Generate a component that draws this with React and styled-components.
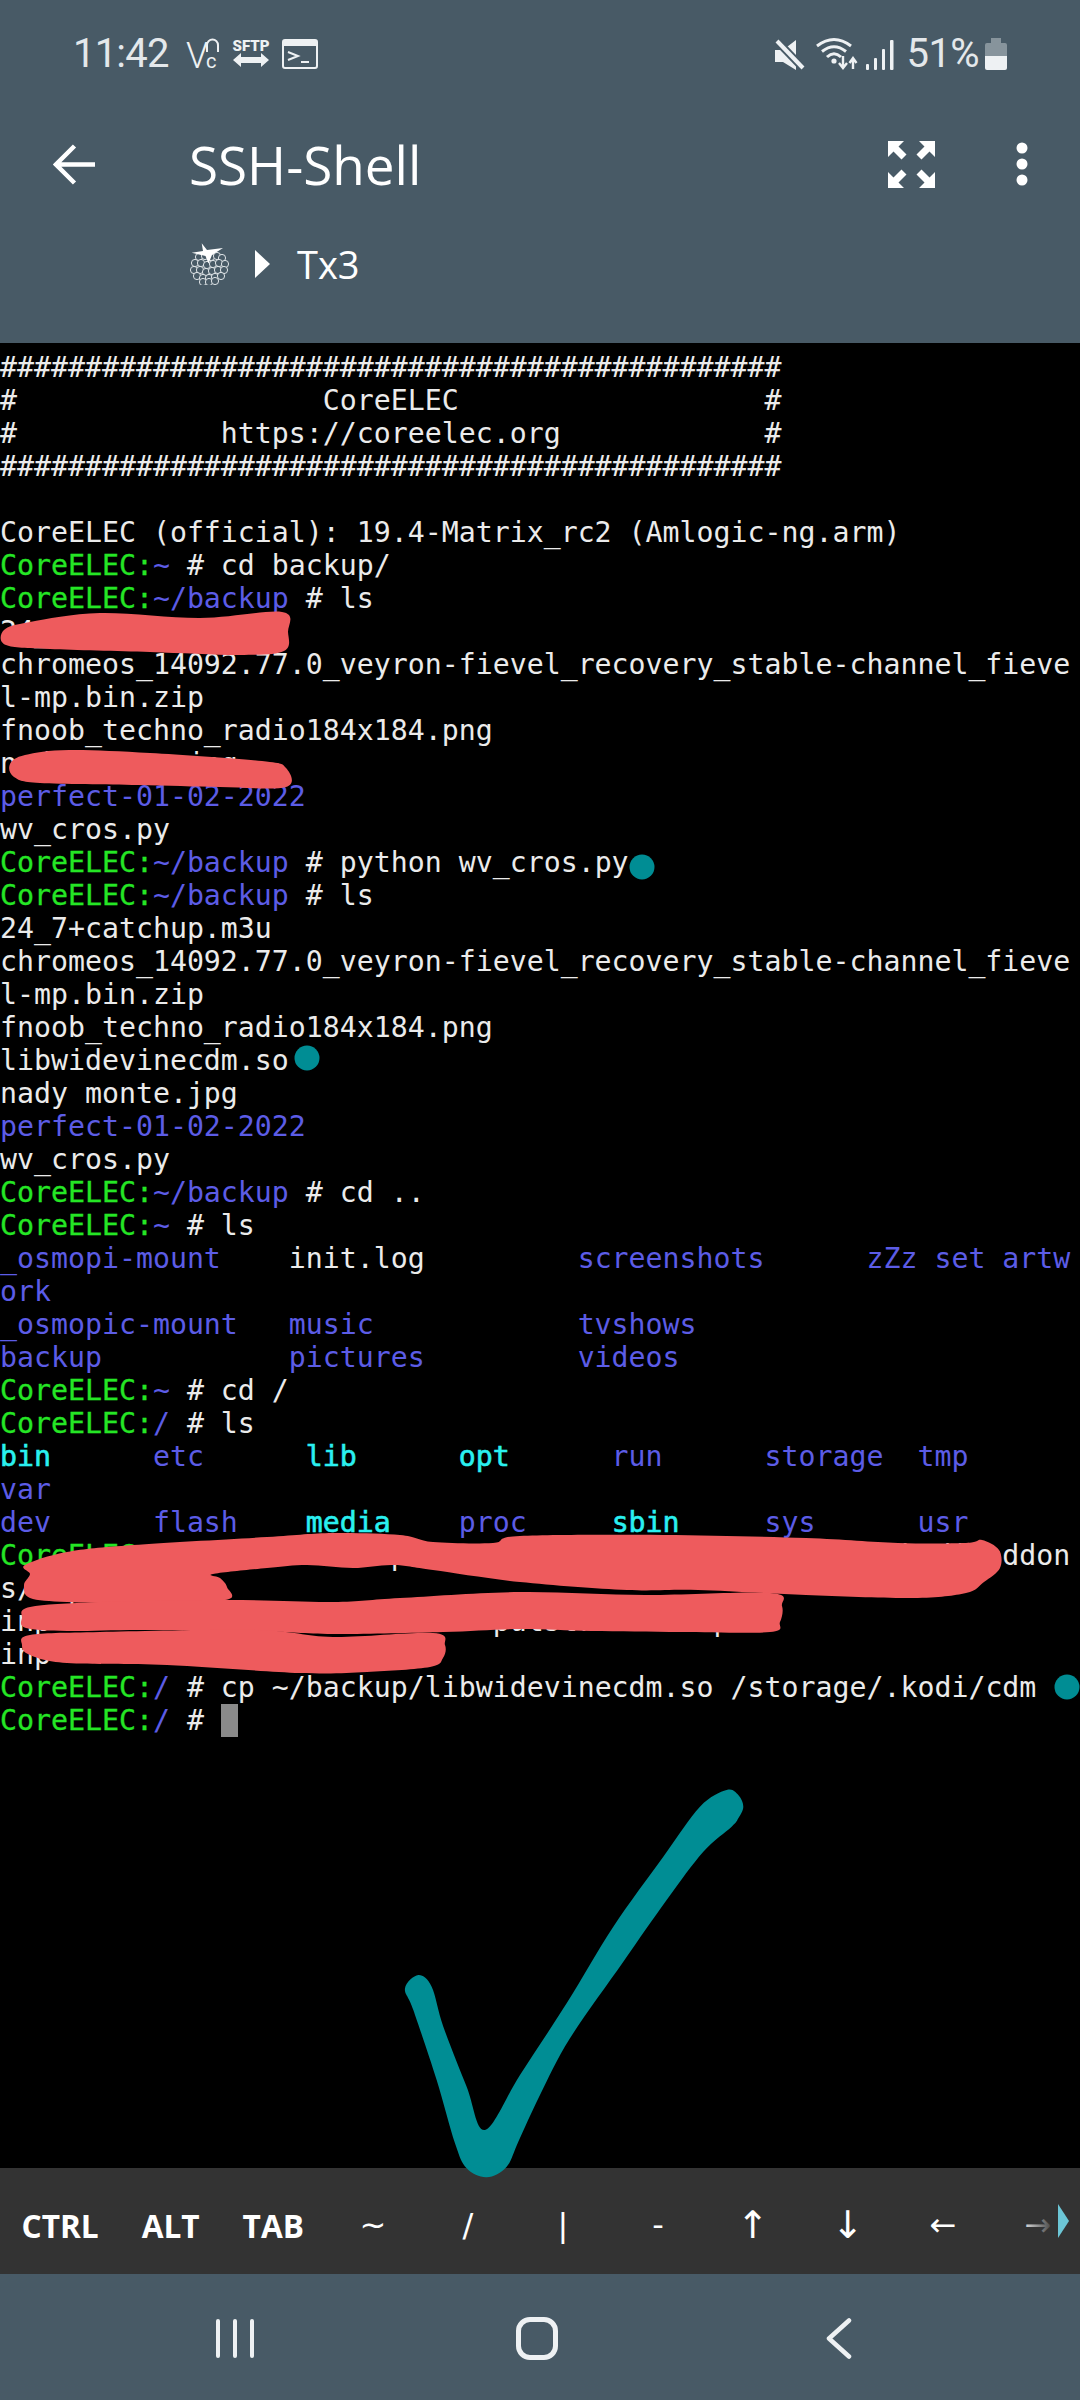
import { createGlobalStyle, styled } from "styled-components";

const GlobalStyle = createGlobalStyle`
    html, body {
        margin:0;
        padding:0;
        background:#000;
    }
`

const BAR = "#485a66";
const ICON = "#eef1f3";

const Page = styled.div`
    position:relative;
    width:1080px;
    height:2400px;
    overflow:hidden;
    display:flex;
    flex-direction:column;
    background:#000;
`

const Header = styled.header`
    height:343px;
    flex:none;
    background:${BAR};
    display:flex;
    flex-direction:column;
    color:#fff;
`

const StatusBar = styled.div`
    height:108px;
    flex:none;
    display:flex;
    align-items:center;
    justify-content:space-between;
    padding:0 73px 0 73px;
`

const StatusGroup = styled.div`
    display:flex;
    align-items:center;
`

const Slot = styled.div`
    display:flex;
    align-items:center;
    margin-right:${(p) => p.$after || 0}px;
`

const StatusText = styled.span`
    font-family:Roboto, sans-serif;
    font-weight:400;
    font-size:40px;
    line-height:40px;
    letter-spacing:${(p) => p.$spacing || 0}px;
    color:#e4e8eb;
`

const Toolbar = styled.div`
    height:112px;
    flex:none;
    display:flex;
    align-items:center;
    padding:0 52px 0 53px;
`

const Title = styled.div`
    font-family:"Open Sans", sans-serif;
    font-size:53px;
    margin-left:94px;
    flex:1;
`

const ToolIcons = styled.div`
    display:flex;
    align-items:center;
    gap:81px;
`

const Crumbs = styled.div`
    height:88px;
    flex:none;
    display:flex;
    align-items:center;
    padding-left:190px;
`

const CrumbArrow = styled.div`
    width:0;
    height:0;
    margin:0 27px 0 26px;
    border-top:14px solid transparent;
    border-bottom:14px solid transparent;
    border-left:15px solid #fff;
`

const CrumbText = styled.div`
    font-family:"Open Sans", sans-serif;
    font-size:38px;
    line-height:44px;
`

const Terminal = styled.main`
    height:1825px;
    flex:none;
    box-sizing:border-box;
    padding-top:8px;
    background:#000;
    font-family:"DejaVu Sans Mono", monospace;
    font-size:28.22px;
    line-height:33px;
    color:#ebebeb;
`

const Line = styled.div`
    height:33px;
    white-space:pre;
`

const TONES = {
    green:"#25e625",
    blue:"#5c5ce6",
    cyan:"#2af0f0",
};

// bold ansi colours come out only a little heavier on this terminal
const WEIGHT = {
    green:0.3,
    cyan:0.6,
};

const Seg = styled.span`
    color:${(p) => TONES[p.$tone] || "inherit"};
    -webkit-text-stroke:${(p) => WEIGHT[p.$tone] || 0}px ${(p) => TONES[p.$tone] || "transparent"};
`

const Cursor = styled.span`
    background:#8a8a8a;
`

const KeyBar = styled.div`
    position:relative;
    height:106px;
    flex:none;
    background:#333;
    display:flex;
    align-items:center;
    padding-top:8px;
    box-sizing:border-box;
    overflow:hidden;
`

const Key = styled.div`
    flex:none;
    box-sizing:border-box;
    text-align:center;
    color:#fff;
    padding:0 21.5px;
    font:700 31.6px "Open Sans", sans-serif;
`

const SymbolKey = styled.div`
    flex:none;
    width:95px;
    text-align:center;
    color:#fff;
    font:400 ${(p) => p.$size || 32}px/40px "DejaVu Sans", sans-serif;
`

const KeyFade = styled.div`
    position:absolute;
    top:0;
    right:0;
    bottom:0;
    width:62px;
    background:linear-gradient(to right, rgba(51,51,51,0), #333 60%);
`

const MoreArrow = styled.div`
    position:absolute;
    top:36px;
    left:1058px;
    width:0;
    height:0;
    border-top:17px solid transparent;
    border-bottom:17px solid transparent;
    border-left:11px solid #6cc6d6;
`

const NavBar = styled.nav`
    height:126px;
    flex:none;
    box-sizing:border-box;
    padding:2px 0 0 84px;
    background:${BAR};
    display:grid;
    grid-template-columns:repeat(3, 302px);
    align-items:center;
    justify-items:center;
`

const Recents = styled.div`
    display:flex;
    gap:13px;
`

const RecentsBar = styled.div`
    width:4px;
    height:39px;
    border-radius:2px;
    background:${ICON};
`

const HomeButton = styled.div`
    width:32px;
    height:33px;
    border:5px solid ${ICON};
    border-radius:14px;
`

const Scribbles = styled.svg`
    position:absolute;
    top:0;
    left:0;
    pointer-events:none;
`

// closed smooth shape through hand traced points
const smooth = (pts) => {
    const n = pts.length;
    let d = `M${pts[0][0]} ${pts[0][1]}`;
    for (let i = 0; i < n; i++) {
        const p0 = pts[(i - 1 + n) % n];
        const p1 = pts[i];
        const p2 = pts[(i + 1) % n];
        const p3 = pts[(i + 2) % n];
        const c1x = p1[0] + (p2[0] - p0[0]) / 6;
        const c1y = p1[1] + (p2[1] - p0[1]) / 6;
        const c2x = p2[0] - (p3[0] - p1[0]) / 6;
        const c2y = p2[1] - (p3[1] - p1[1]) / 6;
        d += ` C${c1x} ${c1y} ${c2x} ${c2y} ${p2[0]} ${p2[1]}`;
    }
    return d + " Z";
};

const PAINT = [
    [[4,630],[30,622],[100,613],[200,618],[282,612],[288,632],[284,651],[240,655],[150,652],[50,649],[6,645]],
    [[10,764],[25,755],[69,750],[150,753],[262,761],[286,768],[286,787],[220,787],[138,785],[40,783],[14,777]],
    [[25,1565],[67,1552],[133,1545],[267,1537],[333,1533],[400,1535],[433,1542],[493,1543],[520,1536],[663,1535],[806,1538],[898,1543],[966,1543],[982,1540],[999,1550],[1000,1568],[984,1582],[966,1593],[913,1598],[806,1595],[698,1590],[627,1590],[520,1582],[433,1570],[393,1565],[353,1568],[307,1565],[267,1568],[213,1574],[220,1578],[227,1587],[225,1600],[140,1603],[67,1602],[30,1598],[24,1585],[30,1574]],
    [[22,1618],[30,1607],[100,1602],[227,1600],[333,1602],[400,1598],[520,1592],[645,1595],[770,1593],[782,1606],[780,1622],[770,1632],[681,1632],[591,1631],[520,1629],[443,1632],[333,1634],[260,1631],[140,1630],[67,1631],[26,1628]],
    [[22,1645],[30,1635],[100,1632],[257,1630],[333,1637],[433,1633],[445,1645],[443,1658],[430,1667],[367,1672],[300,1673],[167,1665],[67,1663],[30,1655]],
];

const CHECK = [[75,655],[115,615],[155,650],[190,770],[260,950],[315,1080],[420,915],[560,700],[700,470],[850,260],[960,110],[1040,60],[1075,75],[1090,110],[1075,145],[1055,170],[970,245],[860,390],[730,575],[570,805],[480,975],[415,1115],[380,1190],[320,1222],[260,1195],[225,1120],[170,930],[100,720]];

const DOTS = [[642,867],[307,1058],[1067,1687]];

const prompt = (path, rest) => [["green","CoreELEC:"],["blue",path],[null," # "+rest]];
const white = (text) => [[null,text]];
const blue = (text) => [["blue",text]];

const HASHES = "#".repeat(46);

const LINES = [
    white(HASHES),
    white("#                  CoreELEC                  #"),
    white("#            https://coreelec.org            #"),
    white(HASHES),
    white(" "),
    white("CoreELEC (official): 19.4-Matrix_rc2 (Amlogic-ng.arm)"),
    prompt("~","cd backup/"),
    prompt("~/backup","ls"),
    white("24_7+catchup.m3u"),
    white("chromeos_14092.77.0_veyron-fievel_recovery_stable-channel_fieve"),
    white("l-mp.bin.zip"),
    white("fnoob_techno_radio184x184.png"),
    white("nady monte.jpg"),
    blue("perfect-01-02-2022"),
    white("wv_cros.py"),
    prompt("~/backup","python wv_cros.py"),
    prompt("~/backup","ls"),
    white("24_7+catchup.m3u"),
    white("chromeos_14092.77.0_veyron-fievel_recovery_stable-channel_fieve"),
    white("l-mp.bin.zip"),
    white("fnoob_techno_radio184x184.png"),
    white("libwidevinecdm.so"),
    white("nady monte.jpg"),
    blue("perfect-01-02-2022"),
    white("wv_cros.py"),
    prompt("~/backup","cd .."),
    prompt("~","ls"),
    [["blue","_osmopi-mount"],[null,"    init.log         "],["blue","screenshots      zZz set artw"]],
    blue("ork"),
    blue("_osmopic-mount   music            tvshows"),
    blue("backup           pictures         videos"),
    prompt("~","cd /"),
    prompt("/","ls"),
    [["cyan","bin"],["blue","      etc      "],["cyan","lib"],[null,"      "],["cyan","opt"],["blue","      run      storage  tmp"]],
    blue("var"),
    [["blue","dev      flash    "],["cyan","media"],["blue","    proc     "],["cyan","sbin"],["blue","     sys      usr"]],
    prompt("/"," ".repeat(10)+"p"+" ".repeat(28)+".kodi/addon"),
    white("s/  p        ."),
    white("inp            p             putstream    p"),
    white("inp            p"),
    prompt("/","cp ~/backup/libwidevinecdm.so /storage/.kodi/cdm"),
];

const VncIcon = () => (
    <svg width="34" height="50" viewBox="0 -10 34 50">
        <text x="0" y="29" fontFamily="Roboto, sans-serif" fontWeight="300" fontSize="36" fill={ICON}>V</text>
        <path d="M21 13V6a5 5 0 0 1 11 0v7" fill="none" stroke={ICON} strokeWidth="2"/>
        <text x="20" y="29" fontFamily="Roboto, sans-serif" fontSize="20" fill={ICON}>c</text>
    </svg>
);

const SftpIcon = () => (
    <svg width="38" height="50" viewBox="0 -10 38 50">
        <text x="19" y="12" textAnchor="middle" fontFamily="Roboto, sans-serif" fontWeight="900" fontSize="15" fill={ICON}>SFTP</text>
        <path d="M9 14v4h20v-4l8 7-8 7v-4H9v4l-8-7z" fill={ICON}/>
    </svg>
);

const ShellIcon = () => (
    <svg width="36" height="30" viewBox="0 0 36 30">
        <rect x="1" y="1" width="34" height="28" rx="2" fill="none" stroke={ICON} strokeWidth="2"/>
        <rect x="1" y="1" width="34" height="6" fill={ICON}/>
        <path d="M6 13l10 4-10 4" fill="none" stroke={ICON} strokeWidth="2"/>
        <path d="M19 23h8" stroke={ICON} strokeWidth="2"/>
    </svg>
);

const MuteIcon = () => (
    <svg width="31" height="33" viewBox="0 0 31 33">
        <path d="M1 12h8L22 2v30L9 24H1z" fill={ICON}/>
        <path d="M3 3l25 26" stroke={BAR} strokeWidth="8"/>
        <path d="M3 3l26 27" stroke={ICON} strokeWidth="4"/>
    </svg>
);

const WifiIcon = () => (
    <svg width="42" height="34" viewBox="0 0 42 34">
        <g fill="none" stroke={ICON}>
            <path d="M1 9Q18-4 35 9" strokeWidth="3"/>
            <path d="M6 14.5Q18 5 30 14.5" strokeWidth="3"/>
            <path d="M11 20Q18 13.5 25 20" strokeWidth="3"/>
            <path d="M27 19v11M23 26l4 5 4-5M37 32V21M33.500 26l3.500-5 3.500 5" strokeWidth="2.400"/>
        </g>
        <circle cx="18" cy="24" r="2.600" fill={ICON}/>
    </svg>
);

const SignalIcon = () => (
    <svg width="29" height="31" viewBox="0 0 29 31">
        <rect x="0" y="25" width="3" height="6" rx="1" fill={ICON}/>
        <rect x="8" y="19" width="3" height="12" rx="1" fill={ICON}/>
        <rect x="16" y="10" width="3" height="21" rx="1" fill={ICON}/>
        <rect x="24" y="1" width="3.500" height="30" rx="1" fill={ICON}/>
    </svg>
);

const BatteryIcon = () => (
    <svg width="22" height="32" viewBox="0 0 22 32">
        <path d="M6 0h10v5h4a2 2 0 0 1 2 2v12H0V7a2 2 0 0 1 2-2h4z" fill="#87949c"/>
        <path d="M0 18h22v12a2 2 0 0 1-2 2H2a2 2 0 0 1-2-2z" fill={ICON}/>
    </svg>
);

const BackIcon = () => (
    <svg width="42" height="41" viewBox="0 0 42 41">
        <path d="M42 20.500H3M21.500 2L3 20.500 21.500 39" fill="none" stroke="#fff" strokeWidth="4.500"/>
    </svg>
);

const FullscreenIcon = () => (
    <svg width="47" height="47" viewBox="0 0 47 47" fill="#fff">
        <path d="M0 0h16l-5.500 5.500 8 8-5 5-8-8L0 16z"/>
        <path d="M47 0H31l5.500 5.500-8 8 5 5 8-8L47 16z"/>
        <path d="M0 47h16l-5.500-5.500 8-8-5-5-8 8L0 31z"/>
        <path d="M47 47H31l5.500-5.500-8-8 5-5 8 8L47 31z"/>
    </svg>
);

const MenuIcon = () => (
    <svg width="12" height="44" viewBox="0 0 12 44" fill="#fff">
        <circle cx="6" cy="6" r="5.500"/>
        <circle cx="6" cy="22" r="5.500"/>
        <circle cx="6" cy="38" r="5.500"/>
    </svg>
);

const BERRY = [
    [9,14],[15,13],[21,14],[27,13],[32,15],
    [5,20],[11,20],[17,22],[23,21],[29,20],[35,21],
    [4,27],[10,27],[16,29],[22,28],[28,27],[34,27],
    [7,33],[13,35],[19,35],[25,34],[31,33],[13,39],[19,39],[25,38],
];

const BerryIcon = () => (
    <svg width="39" height="42" viewBox="0 0 39 42">
        <g fill={BAR} stroke="#dfe4e7" strokeWidth="1">
            {BERRY.map(([x,y],i)=>(
                <circle key={i} cx={x} cy={y} r="3.600"/>
            ))}
        </g>
        <path d="M11.700.3L17 7l16-2-11 7-3.500 8.500-3-7.500L1.700 9.700 13 8z" fill="#fff"/>
    </svg>
);

const BackNavIcon = () => (
    <svg width="26" height="41" viewBox="0 0 26 41">
        <path d="M23 2.500L3 20.500 23 38.500" fill="none" stroke={ICON} strokeWidth="4.500" strokeLinecap="round" strokeLinejoin="round"/>
    </svg>
);

const KEYS = ["CTRL","ALT","TAB"];
const SYMBOLS = [["~"],["/"],["|"],["-"],["↑",38],["↓",38],["←"],["→"]];

const App = () => {
    return(
        <Page>
            <GlobalStyle/>
            <Header>
                <StatusBar>
                    <StatusGroup>
                        <Slot $after={17}><StatusText $spacing={-0.8}>11:42</StatusText></Slot>
                        <Slot $after={12}><VncIcon/></Slot>
                        <Slot $after={12}><SftpIcon/></Slot>
                        <ShellIcon/>
                    </StatusGroup>
                    <StatusGroup>
                        <Slot $after={11}><MuteIcon/></Slot>
                        <Slot $after={8}><WifiIcon/></Slot>
                        <Slot $after={12}><SignalIcon/></Slot>
                        <Slot $after={6}><StatusText $spacing={-0.6}>51%</StatusText></Slot>
                        <BatteryIcon/>
                    </StatusGroup>
                </StatusBar>
                <Toolbar>
                    <BackIcon/>
                    <Title>SSH-Shell</Title>
                    <ToolIcons>
                        <FullscreenIcon/>
                        <MenuIcon/>
                    </ToolIcons>
                </Toolbar>
                <Crumbs>
                    <BerryIcon/>
                    <CrumbArrow/>
                    <CrumbText>Tx3</CrumbText>
                </Crumbs>
            </Header>

            <Terminal>
                {LINES.map((segs,i)=>(
                    <Line key={i}>
                        {segs.map(([tone,text],j)=>(
                            <Seg key={j} $tone={tone}>{text}</Seg>
                        ))}
                    </Line>
                ))}
                <Line>
                    <Seg $tone="green">CoreELEC:</Seg>
                    <Seg $tone="blue">/</Seg>
                    <Seg> # </Seg>
                    <Cursor> </Cursor>
                </Line>
            </Terminal>

            <KeyBar>
                {KEYS.map((k)=>(
                    <Key key={k}>{k}</Key>
                ))}
                {SYMBOLS.map(([k,size])=>(
                    <SymbolKey key={k} $size={size}>{k}</SymbolKey>
                ))}
                <KeyFade/>
                <MoreArrow/>
            </KeyBar>

            <NavBar>
                <Recents>
                    <RecentsBar/>
                    <RecentsBar/>
                    <RecentsBar/>
                </Recents>
                <HomeButton/>
                <BackNavIcon/>
            </NavBar>

            <Scribbles width="1080" height="2400" viewBox="0 0 1080 2400">
                {PAINT.map((pts,i)=>(
                    <path key={i} d={smooth(pts)} fill="#ee5b5d"/>
                ))}
                {DOTS.map(([x,y],i)=>(
                    <circle key={i} cx={x} cy={y} r="12.500" fill="#008d94"/>
                ))}
                <g transform="translate(380 1770) scale(0.3333)">
                    <path d={smooth(CHECK)} fill="#008d94"/>
                </g>
            </Scribbles>
        </Page>
    )
}

export default App;
